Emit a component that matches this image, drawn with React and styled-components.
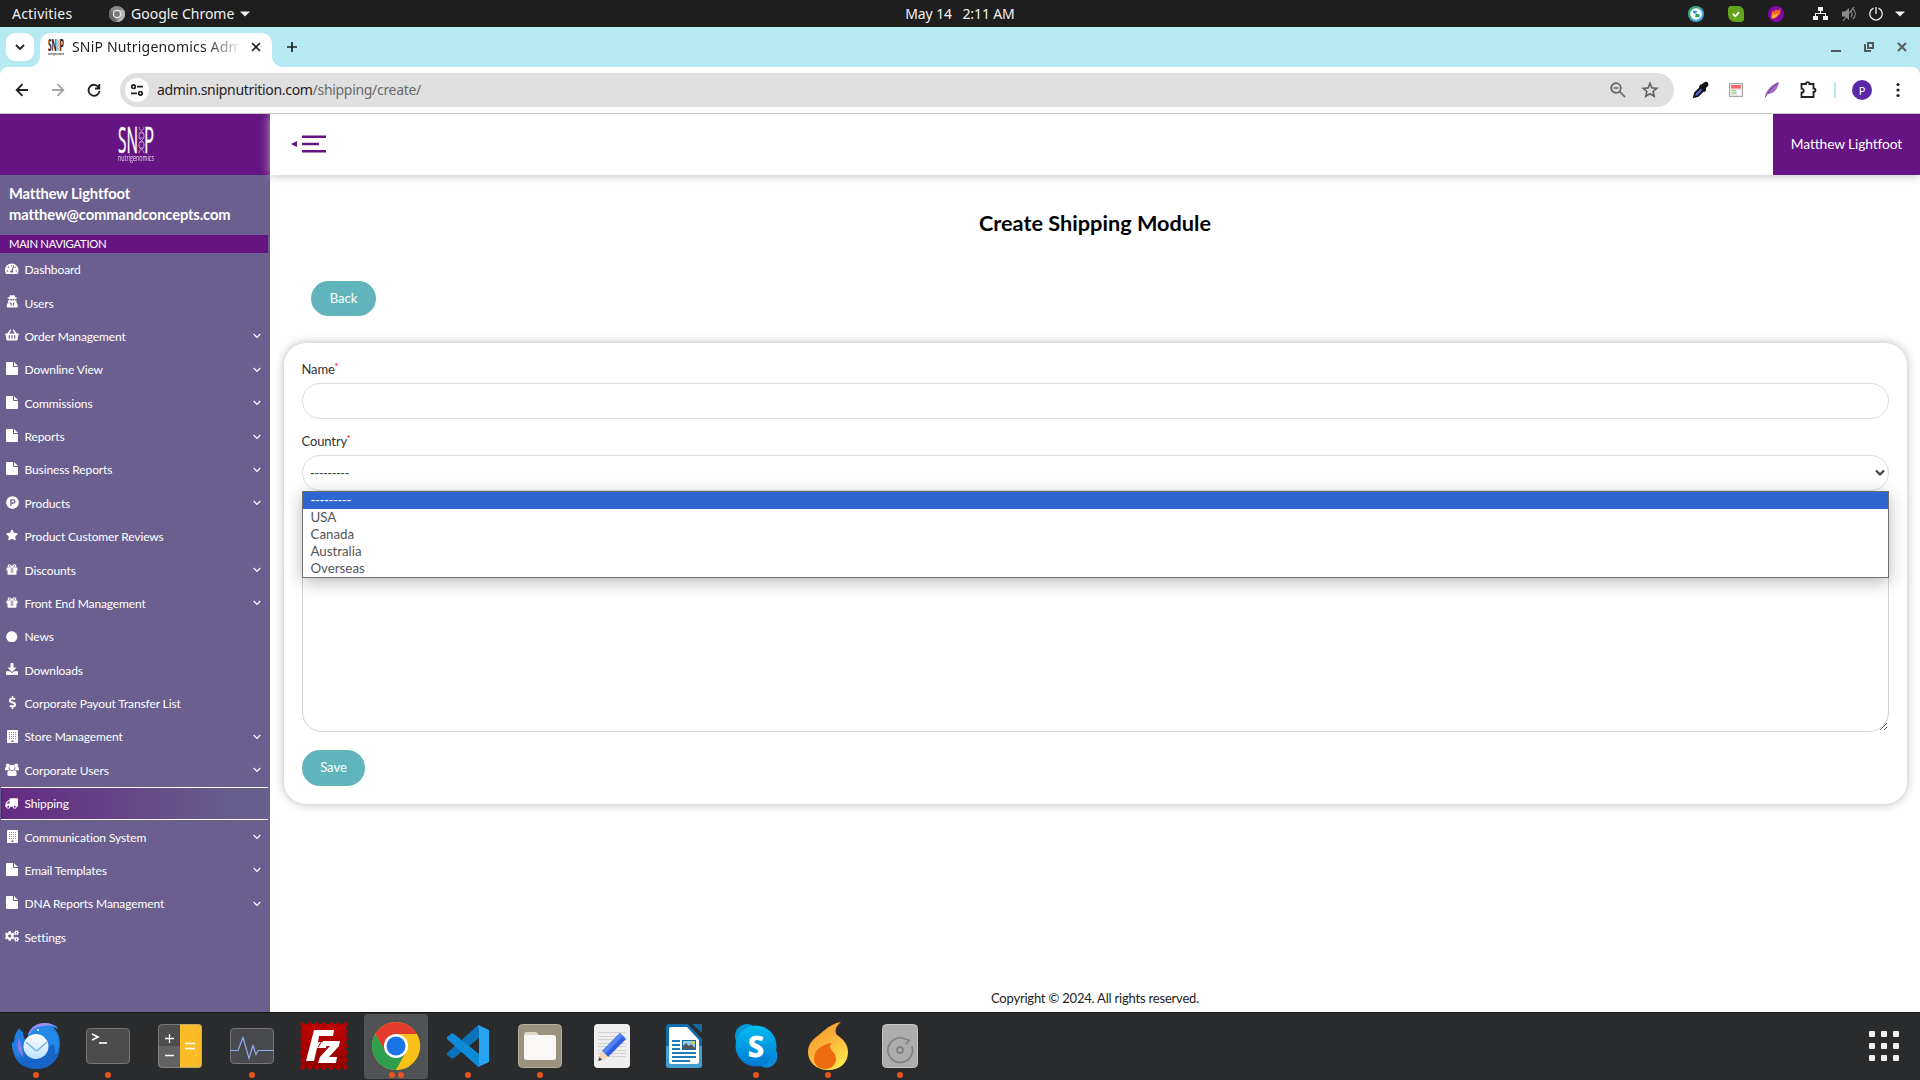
import React from 'react';
import styled, { createGlobalStyle, css } from 'styled-components';
import {
  FaTachometerAlt, FaUserSecret, FaShoppingBasket, FaProductHunt, FaStar,
  FaCircle, FaDownload, FaDollarSign, FaTruck, FaCogs,
} from 'react-icons/fa';

const PURPLE = '#661483';
const TEAL = '#60b5bc';
const SHADOW = '#b9b2b4';

const GlobalStyle = createGlobalStyle`
  *, *::before, *::after { box-sizing: border-box; }
  html, body { margin: 0; padding: 0; overflow: hidden; }
  body { font-family: Lato, "Liberation Sans", sans-serif; background: #fff; }
  svg { display: block; flex: none; }
`;

const Screen = styled.div`
  width: 1920px;
  height: 1080px;
  display: flex;
  flex-direction: column;
  overflow: hidden;
`;

/* ---------- desktop top bar ---------- */
const systemFont = css`font-family: "Noto Sans", "Open Sans", sans-serif;`;

const TopBar = styled.header`
  ${systemFont}
  height: 27px;
  flex: none;
  background: #1e1e1e;
  color: #f2f2f2;
  font-size: 14px;
  display: grid;
  grid-template-columns: 1fr auto 1fr;
  align-items: center;
  line-height: 26px;
`;
const TopLeft = styled.div`
  display: flex;
  align-items: center;
  padding-left: 12px;
`;
const Label = styled.span`
  letter-spacing: ${(p) => p.$track || 0}px;
  white-space: pre;
  width: ${(p) => (p.$w ? `${p.$w}px` : 'auto')};
`;
const AppMenu = styled.div`
  display: flex;
  align-items: center;
  margin-left: 35px;
  svg + span { margin-left: 6px; }
  span + svg { margin-left: 6px; }
`;
const Tray = styled.div`
  display: flex;
  justify-content: flex-end;
  align-items: center;
  padding-right: 12px;
`;
const TrayIcon = styled.span`
  display: flex;
  justify-content: center;
  width: 16px;
  margin-left: ${(p) => p.$gap}px;
`;

/* ---------- browser ---------- */
const TabStrip = styled.div`
  ${systemFont}
  height: 40px;
  flex: none;
  background: #b6e9f2;
  display: flex;
  align-items: flex-start;
  padding: 6px 13px 0 6px;
`;
const TabSearch = styled.div`
  width: 28px;
  height: 28px;
  border-radius: 9px;
  background: #fff;
  display: grid;
  place-items: center;
`;
const Tab = styled.div`
  position: relative;
  width: 232px;
  height: 34px;
  margin-left: 6px;
  border-radius: 10px 10px 0 0;
  background: #fff;
  display: flex;
  align-items: center;
  padding: 0 10px 6px 8px;
  &::before, &::after {
    content: '';
    position: absolute;
    bottom: 0;
    width: 10px;
    height: 10px;
  }
  &::before { left: -10px; background: radial-gradient(circle at 0 0, transparent 9.5px, #fff 10px); }
  &::after { right: -10px; background: radial-gradient(circle at 100% 0, transparent 9.5px, #fff 10px); }
`;
const TabTitle = styled.span`
  width: 167px;
  margin-left: 8px;
  overflow: hidden;
  white-space: nowrap;
  font-size: 14px;
  letter-spacing: 0.18px;
  line-height: 26px;
  color: #1f2023;
  -webkit-mask-image: linear-gradient(90deg, #000 134px, transparent 170px);
  mask-image: linear-gradient(90deg, #000 134px, transparent 170px);
`;
const TabClose = styled.span`margin-left: 12px;`;
const NewTab = styled.span`margin: 9px 0 0 15px;`;
const WindowControls = styled.div`
  margin-left: auto;
  display: flex;
  gap: 23px;
  padding-top: 9px;
`;
const ToolbarBack = styled.div`
  background: #b6e9f2;
  flex: none;
`;
const Toolbar = styled.div`
  ${systemFont}
  height: 47px;
  background: #fff;
  border-bottom: 1px solid #c8c9c9;
  border-radius: 8px 8px 0 0;
  display: flex;
  align-items: center;
  padding: 0 15px 0 15px;
`;
const NavButtons = styled.div`
  display: flex;
  gap: 22px;
  margin-right: 19px;
`;
const Omnibox = styled.div`
  width: 1554px;
  height: 34px;
  border-radius: 17px;
  background: #e0e0e0;
  display: flex;
  align-items: center;
  padding: 0 15px 0 5px;
  font-size: 14px;
  color: #1f2023;
`;
const SiteInfo = styled.span`
  width: 24px;
  height: 24px;
  border-radius: 50%;
  background: #fff;
  display: grid;
  place-items: center;
  margin-right: 8px;
`;
const Url = styled.span`
  letter-spacing: -0.31px;
  padding-bottom: 2px;
`;
const UrlPath = styled.span`color: #68696b;`;
const OmniActions = styled.div`
  margin-left: auto;
  display: flex;
  gap: 14px;
`;
const Extensions = styled.div`
  display: flex;
  align-items: center;
  gap: 18px;
  margin-left: 17px;
`;
const Divider = styled.i`
  width: 2px;
  height: 16px;
  background: #b6e9f2;
  margin-left: 17px;
`;
const Avatar = styled.span`
  width: 20px;
  height: 20px;
  border-radius: 50%;
  background: #5a27a8;
  color: #fff;
  font-size: 11px;
  display: grid;
  place-items: center;
  margin-left: 16px;
`;
const More = styled.span`margin-left: 24px;`;

/* ---------- page ---------- */
const Page = styled.div`
  height: 898px;
  flex: none;
  display: flex;
`;
const Sidebar = styled.aside`
  width: 270px;
  background: #6a5f8f;
  color: #fff;
  display: flex;
  flex-direction: column;
`;
const Brand = styled.div`
  height: 61px;
  background: ${PURPLE};
  display: flex;
  justify-content: center;
  padding: 11px 0 0 2px;
`;
const UserBlock = styled.div`
  height: 60px;
  padding: 8px 9px 0;
  font-size: 14.7px;
  letter-spacing: -0.12px;
  font-weight: 700;
  line-height: 21.4px;
`;
const NavHeading = styled.div`
  width: 268px;
  height: 18px;
  background: ${PURPLE};
  padding-left: 9px;
  font-size: 11.3px;
  letter-spacing: -0.3px;
  line-height: 18px;
`;
const NavItem = styled.a`
  width: 268px;
  height: 33.375px;
  display: flex;
  align-items: center;
  padding: 0 7px 0 5px;
  font-size: 12px;
  color: #fff;
  flex: none;
  ${(p) => p.$active && css`
    margin-left: 1px;
    width: 267px;
    padding-left: 4px;
    border-top: 1px solid #fff;
    border-bottom: 1px solid #fff;
    background: linear-gradient(90deg, ${PURPLE} 0, ${PURPLE} 1px, #652a83 1px, #665f8d 88%);
  `}
`;
const NavIcon = styled.span`
  width: 14px;
  margin-right: 5.5px;
  padding-bottom: ${(p) => p.$lift}px;
  display: flex;
  justify-content: center;
  transform: ${(p) => (p.$flip ? 'scaleX(-1)' : 'none')};
`;
const NavText = styled.span`
  flex: 1;
  line-height: 16px;
  letter-spacing: -0.12px;
  padding-top: 1px;
`;

const Main = styled.main`
  flex: 1;
  display: flex;
  flex-direction: column;
`;
const PageHeader = styled.div`
  height: 61px;
  flex: none;
  background: #fff;
  box-shadow: 0 0 10px ${SHADOW};
  display: flex;
  justify-content: space-between;
  align-items: center;
  padding-left: 21px;
  clip-path: inset(0 0 -20px -10px);
`;
const MenuToggle = styled.div`
  padding-bottom: 0.5px;
`;
const Account = styled.div`
  width: 147px;
  height: 61px;
  background: ${PURPLE};
  color: #fff;
  font-size: 13.8px;
  letter-spacing: -0.12px;
  padding-bottom: 2px;
  display: grid;
  place-items: center;
`;
const Title = styled.h1`
  margin: 35px 0 0;
  font-size: 21.7px;
  line-height: 26px;
  font-weight: 700;
  color: #000;
  text-align: center;
`;
const Button = styled.button`
  height: ${(p) => p.$h}px;
  width: ${(p) => p.$w}px;
  border: 0;
  border-radius: 18px;
  background: ${TEAL};
  color: #fff;
  font: 13px Lato, "Liberation Sans", sans-serif;
  padding: 0 0 ${(p) => p.$lift || 1}px;
`;
const Actions = styled.div`
  padding: 45px 41px 0;
  display: flex;
`;
const Card = styled.section`
  margin: 27px 13px 0 14px;
  height: 461px;
  border-radius: 22px;
  padding: 17px 18px 0;
  background: #fff;
  box-shadow: 0 0 10px ${SHADOW};
`;
const Field = styled.div`
  position: relative;
  height: 72px;
`;
const FieldLabel = styled.label`
  display: block;
  height: 23px;
  line-height: 19px;
  font-size: 13px;
  letter-spacing: -0.12px;
  margin-left: -0.5px;
  color: #333;
  sup { color: #f00; font-size: 10px; line-height: 0; vertical-align: 4px; margin-left: -0.5px; }
`;
const Control = styled.div`
  height: 36px;
  border: 1px solid #dcdcdc;
  border-radius: 18px;
  display: flex;
  align-items: center;
  justify-content: space-between;
  padding: 0 3px 0 7px;
  font-size: 13px;
  letter-spacing: -0.5px;
  color: #444;
`;
const Options = styled.ul`
  position: absolute;
  z-index: 2;
  left: 0;
  right: 0;
  top: 59px;
  margin: 0;
  padding: 0;
  list-style: none;
  border: 1px solid #6f6f6f;
  background: #fff;
  box-shadow: 0 4px 16px rgba(0, 0, 0, 0.28);
`;
const Option = styled.li`
  height: 17px;
  line-height: 17px;
  padding-left: 7.5px;
  font-size: 13.3px;
  letter-spacing: ${(p) => (p.$selected ? '-0.45px' : '0')};
  color: ${(p) => (p.$selected ? '#fff' : '#555')};
  background: ${(p) => (p.$selected ? '#2e66cf' : '#fff')};
`;
const TextArea = styled.textarea`
  display: block;
  width: 100%;
  height: 205px;
  margin: 23px 0 18px;
  border: 1px solid #ced4da;
  border-radius: 20px;
  resize: vertical;
  outline: 0;
`;
const Footer = styled.footer`
  margin-top: auto;
  padding-bottom: 6px;
  text-align: center;
  font-size: 13px;
  letter-spacing: -0.2px;
  line-height: 16px;
  color: #222;
`;

/* ---------- dock ---------- */
const Dock = styled.nav`
  height: 68px;
  flex: none;
  background: #2a2b2d;
  border-top: 1px solid #1b1b1d;
  display: flex;
`;
const DockItem = styled.div`
  width: 64px;
  height: 65px;
  margin: 1px 4px 0;
  border-radius: 4px;
  background: ${(p) => (p.$active ? '#515254' : 'transparent')};
  display: flex;
  flex-direction: column;
  align-items: center;
  padding-top: 7px;
`;
const Dots = styled.div`
  display: flex;
  gap: 3px;
  margin-top: 1px;
  i { width: 6px; height: 6px; border-radius: 50%; background: #e95420; }
`;
const AppGrid = styled.div`
  margin: 18px 21px 0 auto;
  display: grid;
  grid-template-columns: repeat(3, 6px);
  grid-auto-rows: 6px;
  gap: 6px;
  i { background: #f1f1ef; border-radius: 1px; }
`;

const Stroke = ({ w = 14, h = w, vb, d, color = '#1f2023', sw = 2, children }) => (
  <svg width={w} height={h} viewBox={vb || `0 0 ${w} ${h}`} fill="none" stroke={color} strokeWidth={sw}>
    {d && <path d={d} />}
    {children}
  </svg>
);

const LogoMark = ({ w, h, dark }) => {
  const c = dark ? '#222' : '#fff';
  return (
    <svg width={w} height={h} viewBox="0 0 36 38" fill={c} overflow="visible" fontFamily='"Open Sans", sans-serif' fontWeight={dark ? 700 : 400} stroke={c} strokeWidth={dark ? 0 : 0.4}>
      <text x="0" y="27" fontSize="36" textLength="20" lengthAdjust="spacingAndGlyphs">SN</text>
      <text x="26" y="27" fontSize="36" textLength="10" lengthAdjust="spacingAndGlyphs">P</text>
      <g fill="none" stroke={dark ? '#c96' : '#cdb2d8'} strokeWidth={dark ? 2 : 0.9}>
        <path d="M21 1c0 4 5 4 5 9s-5 4-5 9 5 4 5 8M26 1c0 4-5 4-5 9s5 4 5 9-5 4-5 8M21.5 7h4M21.5 12h4M21.5 16h4M21.5 22h4" />
      </g>
      <text x="0" y="35" fontSize="9.5" strokeWidth="0" opacity="0.85" textLength="36" lengthAdjust="spacingAndGlyphs">nutrigenomics</text>
    </svg>
  );
};

const PageIcon = () => (
  <svg width="12" height="13" viewBox="0 0 12 13" fill="#fff">
    <path d="M1 0h6v4.200c0 .4.3.8.8.8H12v7.200a.8.8 0 0 1-.8.8H.8a.8.8 0 0 1-.8-.8V.8C0 .3.400 0 1 0zM8 0l4 4H8z" />
  </svg>
);
const GiftIcon = () => (
  <svg width="12" height="11" viewBox="0 0 12 11">
    <path d="M.5 3.500h11v3h-1V10a.8.8 0 0 1-.8.8H2.300a.8.8 0 0 1-.8-.8V6.500h-1z" fill="#fff" />
    <path d="M6 3.500C5 1.500 4.300.7 3.300.7 1.800.700 1.800 3 3.300 3H6c-.1 0 1-2.300 2.700-2.300 1.500 0 1.500 2.300 0 2.300H6" fill="none" stroke="#fff" strokeWidth="1.100" />
    <path d="M4.800 4v5h.7V4zM6.500 4v5h.7V4z" fill="#6a5f8f" />
  </svg>
);
const BuildingIcon = () => (
  <svg width="11" height="13" viewBox="0 0 11 13">
    <rect width="11" height="13" rx="0.600" fill="#fff" />
    <path d="M2 2.500h7M2 4.500h7M2 6.500h7M2 8.500h7" stroke="#8f86b3" strokeWidth="1" strokeDasharray="1 1" />
    <path d="M4.500 10.500h2V12h-2z" fill="#6a5f8f" />
  </svg>
);
const GroupIcon = () => (
  <svg width="14" height="13" viewBox="0 0 14 13" fill="#fff">
    <circle cx="2.800" cy="2.300" r="1.900" />
    <circle cx="11.200" cy="2.300" r="1.900" />
    <path d="M0 7.300V5.800C0 4.500.600 4 1.300 4h2.400c-.4 1.300.1 2.400 1 3.300zM14 7.300V5.800C14 4.500 13.400 4 12.700 4h-2.400c.4 1.300-.1 2.400-1 3.300z" />
    <circle cx="7" cy="4.500" r="2.700" />
    <path d="M2.300 11c0-2.600.9-3.700 2.300-3.700 1.500 1 3.300 1 4.800 0 1.400 0 2.300 1.100 2.300 3.700 0 1.300-.8 2-1.900 2H4.200c-1.100 0-1.900-.7-1.900-2z" />
  </svg>
);

/* label, icon, icon size, has submenu, icon lift */
const NAV = [
  ['Dashboard', FaTachometerAlt, 13.5, 0, 1], ['Users', FaUserSecret, 12.5, 0, 3],
  ['Order Management', FaShoppingBasket, 14, 1, 2], ['Downline View', PageIcon, 13, 1, 2],
  ['Commissions', PageIcon, 13, 1, 2], ['Reports', PageIcon, 13, 1, 2], ['Business Reports', PageIcon, 13, 1, 2],
  ['Products', FaProductHunt, 13, 1, 2], ['Product Customer Reviews', FaStar, 12, 0, 3],
  ['Discounts', GiftIcon, 11, 1, 2], ['Front End Management', GiftIcon, 11, 1, 2], ['News', FaCircle, 11.5, 0, 1],
  ['Downloads', FaDownload, 12, 0, 3], ['Corporate Payout Transfer List', FaDollarSign, 13, 0, 3],
  ['Store Management', BuildingIcon, 13, 1, 1], ['Corporate Users', GroupIcon, 14, 1, 2],
  ['Shipping', FaTruck, 13, 0, 1], ['Communication System', BuildingIcon, 13, 1, 1],
  ['Email Templates', PageIcon, 13, 1, 2], ['DNA Reports Management', PageIcon, 13, 1, 2],
  ['Settings', FaCogs, 14, 0, 2],
];

const Icon48 = ({ children }) => <svg width="50" height="50" viewBox="0 0 50 50">{children}</svg>;

const Thunderbird = () => (
  <Icon48>
    <defs>
      <linearGradient id="tb" x1="0" y1="0" x2="0.4" y2="1"><stop offset="0" stopColor="#2da1f6" /><stop offset="1" stopColor="#0f58bd" /></linearGradient>
      <linearGradient id="tbe" x1="0" y1="0" x2="0" y2="1"><stop offset="0" stopColor="#fff" /><stop offset="1" stopColor="#b9e2ff" /></linearGradient>
    </defs>
    <path d="M1 21c1 1 2 1 2 0 0-6 2-11 6-14 0 2 1 3 3 4 0 5 2 8 5 10l-3 20C4 37 0 29 1 21z" fill="#1f7fe0" />
    <path d="M17 13C20 4 30 0 40 3c4 1 6 2 7 5l-5-2c5 5 7 10 7 17 0 15-10 25-24 25C12 48 3 40 2 29c2 4 4 6 8 8-5-10 0-17 6-20 1-1 1-3 1-4z" fill="url(#tb)" />
    <path d="M17 14C21 3 32 0 40 3l7 4c-7-3-12-3-16-1-6 1-9 4-14 8z" fill="#a78af0" />
    <path d="M20 11c7-9 18-6 23-1 7 8 6 20 0 26l-8-20z" fill="#2589ea" />
    <path d="M8 17c-3 8-1 14 4 19l-1-9z" fill="#8c7ae6" />
    <circle cx="25" cy="25.500" r="12.500" fill="url(#tbe)" />
    <path d="M15 21l9 8c1 1 2 1 3 0l9-8" fill="none" stroke="#79aede" strokeWidth="1.400" />
    <path d="M38 26c0 8-7 13-17 12 2 2 4 3 7 3-8 1-14-1-19-5 3 8 9 12 17 12 13 0 21-9 23-20-2 3-3 4-5 5 1-4 0-8-2-10z" fill="#1765c8" />
    <circle cx="27" cy="9" r="1" fill="#fff" />
  </Icon48>
);
const Terminal = () => (
  <Icon48>
    <rect x="3.500" y="7.500" width="43" height="35" rx="3.500" fill="#4c4c4c" stroke="#777" />
    <path d="M9 13l6 3-6 3" fill="none" stroke="#fff" strokeWidth="1.700" />
    <path d="M16 22h8" stroke="#fff" strokeWidth="1.600" />
  </Icon48>
);
const Calculator = () => (
  <Icon48>
    <path d="M25 3H7a4 4 0 0 0-4 4v18h22z" fill="#4d4d4d" />
    <path d="M25 25H3v18a4 4 0 0 0 4 4h18z" fill="#626262" />
    <path d="M25 3h18a4 4 0 0 1 4 4v36a4 4 0 0 1-4 4H25z" fill="#fcbc28" />
    <rect x="3.500" y="3.500" width="43" height="43" rx="4" fill="none" stroke="#999" opacity="0.600" />
    <path d="M10 17.500h9M14.500 13v9M10 34.500h9M30 22.500h10M30 27.500h10" stroke="#fff" strokeWidth="1.300" />
  </Icon48>
);
const Monitor = () => (
  <Icon48>
    <rect x="3.500" y="7.500" width="43" height="35" rx="3.500" fill="#48494c" stroke="#777" />
    <path d="M3 29.500h8l5-13 6 21 4-13 3 9 2-4h16" fill="none" stroke="#8fadf0" strokeWidth="1.200" />
  </Icon48>
);
const FileZilla = () => (
  <Icon48>
    <defs><linearGradient id="fz" x1="0" y1="0" x2="0" y2="1"><stop offset="0" stopColor="#c20404" /><stop offset="1" stopColor="#920000" /></linearGradient></defs>
    <rect x="3" y="3" width="44" height="44" fill="url(#fz)" />
    <rect x="3.500" y="3.500" width="43" height="43" fill="none" stroke="#ad0202" strokeWidth="4.600" strokeDasharray="0.010 7.157" strokeLinecap="round" />
    <path d="M15 9h20l-1 6H20l-1 6h9l-1 6h-9l-3 13H7z" fill="#fff" />
    <path d="M24 20h17l-1 5-10 11h8l-1 6H19l2-6 10-11h-8z" fill="#fff" />
    <path d="M23 19.500l-4 7" stroke="#a80202" strokeWidth="1" />
  </Icon48>
);
const Chrome = () => (
  <Icon48>
    <circle cx="25" cy="25" r="24" fill="#fbc116" />
    <path d="M4.200 13A24 24 0 0 1 45.800 13H25L14.600 31z" fill="#e33b2e" />
    <path d="M4.200 13A24 24 0 0 0 25 49l10.400-18-10.400 6-10.400-6z" fill="#2ea04d" />
    <path d="M25 13h20.800A24 24 0 0 1 25 49l10.400-18z" fill="#fbc116" />
    <circle cx="25" cy="25" r="12" fill="#fff" />
    <circle cx="25" cy="25" r="9.500" fill="#1a73e8" />
  </Icon48>
);
const VsCode = () => (
  <Icon48>
    <path d="M4 34l4 3c1 1 2 0 3 0L36 17V4c-1 0-2 1-3 2L4 32z" fill="#0b72ba" />
    <path d="M4 16l4-3c1-1 2 0 3 0l25 20v13c-1 0-2-1-3-2L4 18z" fill="#0d8bd9" />
    <path d="M35 4l11 5v32l-11 5c1-1 1-2 1-4V8z" fill="#27a5f3" />
  </Icon48>
);
const Files = () => (
  <Icon48>
    <rect x="3.500" y="3.500" width="43" height="43" rx="4" fill="#9a927d" stroke="#b5ae9d" />
    <path d="M9 14c0-2 1-3 2-3h10l3 3h13v8H9z" fill="#dedacd" />
    <rect x="9" y="14" width="32" height="25" rx="2.500" fill="#f9f8f6" />
  </Icon48>
);
const TextEditor = () => (
  <Icon48>
    <rect x="7" y="3" width="36" height="44" rx="4" fill="#efefef" />
    <path d="M11 11.500h28M11 15.500h28M11 18.500h28M11 22.500h28M11 25.500h28M11 29.500h28M11 32.500h28M11 35.500h28" stroke="#d2d2d2" />
    <path d="M33 12l6 6-18 18-6-6z" fill="#2f5fe0" />
    <path d="M33 12l3 3-18 18-3-3z" fill="#5284f5" />
    <path d="M15 30l6 6-6 3-3-3z" fill="#f7d7b5" />
    <path d="M12.500 36l-1.500 4 4-1z" fill="#444" />
  </Icon48>
);
const Writer = () => (
  <Icon48>
    <path d="M10 3h19l14 15v26a3 3 0 0 1-3 3H10a3 3 0 0 1-3-3V6a3 3 0 0 1 3-3z" fill="#116ca3" />
    <path d="M7 25h36v19a3 3 0 0 1-3 3H10a3 3 0 0 1-3-3z" fill="#3e9fd0" />
    <path d="M33 3h10v9z" fill="#1469a0" />
    <path d="M12 6h16l12 13v22a2 2 0 0 1-2 2H12a2 2 0 0 1-2-2V8a2 2 0 0 1 2-2z" fill="#fff" />
    <path d="M13 20h8M13 24h8M13 28h8M13 32h24M13 36h24M13 40h18" stroke="#1d7cb5" strokeWidth="1.800" />
    <rect x="23.500" y="19.500" width="13" height="9" fill="#8fd0f2" stroke="#1469a0" />
    <path d="M24 28v-3l3-3 3 3 2-2 4 4v1z" fill="#555" />
    <circle cx="34.500" cy="21.500" r="1.500" fill="#fbc116" />
  </Icon48>
);
const SkypeText = styled.text`font: 700 29px "Open Sans", sans-serif;`;
const Skype = () => (
  <Icon48>
    <defs><linearGradient id="sk" x1="0" y1="0" x2="0" y2="1"><stop offset="0" stopColor="#00bdf2" /><stop offset="1" stopColor="#0078d4" /></linearGradient></defs>
    <circle cx="16" cy="15" r="12" fill="#0596d8" />
    <circle cx="35" cy="35" r="11.500" fill="#0b8bdc" />
    <circle cx="25" cy="25" r="20.500" fill="url(#sk)" />
    <SkypeText x="25" y="35.500" fill="#fff" stroke="#fff" strokeWidth="0.800" textAnchor="middle">S</SkypeText>
  </Icon48>
);
const Flame = () => (
  <Icon48>
    <defs><linearGradient id="fl" x1="0" y1="0" x2="0.600" y2="1"><stop offset="0" stopColor="#f79420" /><stop offset="0.500" stopColor="#fbb03a" /><stop offset="1" stopColor="#ffe34a" /></linearGradient></defs>
    <path d="M38 1c-5 4-7 9-4 13 6 4 11 9 11 17 0 11-8 18-20 18S5 41 5 31c0-8 5-13 12-18C24 7 30 2 38 1z" fill="url(#fl)" />
    <path d="M29 22c-3 3-2 5 0 8 3 2 4 5 4 8 0 6-5 10-11 10s-11-4-11-10c0-9 8-15 18-16z" fill="#ee6a10" />
  </Icon48>
);
const Disk = () => (
  <Icon48>
    <rect x="7.500" y="3.500" width="35" height="43" rx="4" fill="#adadad" stroke="#c4c4c4" />
    <path d="M30.500 18A12.300 12.300 0 1 0 37 25.500M30.500 18l3.500 1.500-3 3.500" fill="none" stroke="#818181" strokeWidth="1.700" />
    <circle cx="25" cy="29" r="3" fill="none" stroke="#818181" strokeWidth="1.800" />
  </Icon48>
);

const DOCK = [
  [Thunderbird, 1], [Terminal, 1], [Calculator, 0], [Monitor, 1], [FileZilla, 0], [Chrome, 2],
  [VsCode, 1], [Files, 1], [TextEditor, 0], [Writer, 0], [Skype, 1], [Flame, 1], [Disk, 1],
];

function DesktopBar() {
  return (
    <TopBar>
      <TopLeft>
        <Label $w={62} $track={0.2}>Activities</Label>
        <AppMenu>
          <svg width="16" height="16" viewBox="0 0 16 16">
            <circle cx="8" cy="8" r="8" fill="#8a8a8a" />
            <path d="M8 8L1 4a8 8 0 0 0 6 12z" fill="#6c6c6c" />
            <path d="M8 4h7a8 8 0 0 1-7 12l4-7z" fill="#b5b5b5" />
            <circle cx="8" cy="8" r="4.200" fill="#eee" />
            <circle cx="8" cy="8" r="2.900" fill="#777" />
          </svg>
          <Label $w={103}>Google Chrome</Label>
          <svg width="10" height="6"><path d="M0 .5h10L5 5.500z" fill="#f2f2f2" /></svg>
        </AppMenu>
      </TopLeft>
      <Label $track={-0.12}>{'May 14   2:11 AM'}</Label>
      <Tray>
        <TrayIcon $gap={0}>
          <svg width="16" height="16" viewBox="0 0 16 16"><circle cx="8" cy="8" r="8" fill="#43a6dd" /><path d="M0 8a8 8 0 0 1 8-8l5 2-8 12a8 8 0 0 1-5-6z" fill="#35a96c" /><circle cx="8" cy="8" r="5.800" fill="#fff" /><path d="M5 4.500l4.500.5L7.500 8 5 7z" fill="#2f9fd8" /><path d="M8 7.500l3.500 1v3L7 11z" fill="#2aa06a" /></svg>
        </TrayIcon>
        <TrayIcon $gap={24}>
          <svg width="16" height="16" viewBox="0 0 16 16"><path d="M2 0h8c4 0 6 3 6 7v7l-2 2H8c-5 0-8-3-8-8V2z" fill="#62a51c" /><path d="M5 8l2.300 2.300L11 6.200" fill="none" stroke="#fff" strokeWidth="1.800" /></svg>
        </TrayIcon>
        <TrayIcon $gap={24}>
          <svg width="16" height="16" viewBox="0 0 16 16"><circle cx="8" cy="8" r="8" fill="#8207a8" /><path d="M3 11c0-3 1-5 2-7l1 2 2-3 1 2 4-3c-1 2-1 3-1 4l1-1c-1 4-4 7-9 8z" fill="#f76a1a" /><path d="M4 12c0-2 1-3 2-4l1 1 3-2c0 3-3 5-6 5z" fill="#ffc02e" /></svg>
        </TrayIcon>
        <TrayIcon $gap={28}>
          <svg width="15" height="13" viewBox="0 0 15 13" fill="#f2f2f2"><path d="M5 0h5v4H5zM0 9h5v4H0zM10 9h5v4h-5zM7 4h1v2H7zM2 6h11v1H2zM2 6h1v3H2zM12 6h1v3h-1z" /></svg>
        </TrayIcon>
        <TrayIcon $gap={13}>
          <svg width="15" height="14" viewBox="0 0 15 14"><path d="M0 4.500h3L7 1v12L3 9.500H0z" fill="#8b8b8b" /><path d="M9 4c1.500 2 1.500 4 0 6M11 2c3 3 3 7 0 10M1 14L12 0" stroke="#8b8b8b" fill="none" strokeWidth="1.200" /></svg>
        </TrayIcon>
        <TrayIcon $gap={11}>
          <svg width="14" height="14" viewBox="0 0 14 14" fill="none" stroke="#f2f2f2" strokeWidth="1.300"><path d="M4.500 1.200a6.200 6.200 0 1 0 5 0M7 0v7" /></svg>
        </TrayIcon>
        <TrayIcon $gap={8}>
          <svg width="10" height="6"><path d="M0 .5h10L5 5.500z" fill="#f2f2f2" /></svg>
        </TrayIcon>
      </Tray>
    </TopBar>
  );
}

function Browser() {
  return (
    <>
      <TabStrip>
        <TabSearch><Stroke w={10} h={6} d="M1 1l4 4 4-4" sw={1.8} /></TabSearch>
        <Tab>
          <LogoMark w={16} h={17} dark />
          <TabTitle>SNiP Nutrigenomics Adm</TabTitle>
          <TabClose><Stroke w={10} d="M1 1l8 8M9 1l-8 8" sw={1.7} /></TabClose>
        </Tab>
        <NewTab><Stroke w={10} d="M5 0v10M0 5h10" sw={1.7} /></NewTab>
        <WindowControls>
          <Stroke w={10} d="M0 9h10" color="#555b5d" />
          <Stroke w={10} d="M4 1h5v5H4zM1 2v7h6" color="#555b5d" />
          <Stroke w={10} d="M1 1l8 8M9 1l-8 8" color="#555b5d" />
        </WindowControls>
      </TabStrip>
      <ToolbarBack>
        <Toolbar>
          <NavButtons>
            <Stroke w={14} d="M13 7H2M7.500 1.200L1.700 7l5.800 5.800" sw={1.8} />
            <Stroke w={14} d="M1 7h11M6.500 1.200L12.300 7l-5.800 5.800" sw={1.8} color="#a3a3a3" />
            <Stroke w={14} d="M11.800 4.500A5.500 5.500 0 1 0 12.500 8M12.300 1v4.500H8" sw={1.8} />
          </NavButtons>
          <Omnibox>
            <SiteInfo>
              <Stroke w={14} sw={1.7}><circle cx="3.500" cy="3.700" r="1.800" /><circle cx="10.500" cy="10.300" r="1.800" /><path d="M7 3.700h6M1 10.300h6" /></Stroke>
            </SiteInfo>
            <Url>admin.snipnutrition.com<UrlPath>/shipping/create/</UrlPath></Url>
            <OmniActions>
              <Stroke w={18} color="#5f6164" sw={1.7}><circle cx="7" cy="7" r="4.800" /><path d="M10.500 10.500l5.500 5.500M4.500 7h5" /></Stroke>
              <Stroke w={18} color="#5f6164" sw={1.6} d="M9 2.400l1.900 4.500 4.900.4-3.700 3.200 1.100 4.800L9 12.800l-4.200 2.500 1.100-4.800L2.200 7.300l4.900-.4z" />
            </OmniActions>
          </Omnibox>
          <Extensions>
            <svg width="18" height="18" viewBox="0 0 18 18"><path d="M3 16l1-4 6-6 3 3-6 6z" fill="#5567d8" stroke="#111" strokeWidth="1.800" /><path d="M9 4l2-1 3-2c3-1 4 2 3 4l-2 2 0 3-2 1-5-5z" fill="#111" /></svg>
            <svg width="18" height="18" viewBox="0 0 18 18"><rect x="2.500" y="2.500" width="13" height="13" fill="#e6e6e6" stroke="#a8a8a8" /><path d="M4 4h10v3.500H4z" fill="#f46a6a" /><path d="M10 9h4v5h-4z" fill="#fff" /><path d="M5 9.500h4M5 12h4" stroke="#8ccf5a" /></svg>
            <svg width="18" height="18" viewBox="0 0 18 18"><path d="M2 16C3 9 9 3 16 1c-1 5-3 9-7 11-2 1-4 1-5 1z" fill="#a46cc4" /><path d="M2 16.500C5 11 9 6 15 2" stroke="#6d3494" fill="none" /></svg>
            <Stroke w={18} sw={1.8} d="M3.500 3H7c0-2.600 3.400-2.600 3.400 0h4.100v4.500c2.600 0 2.600 3.400 0 3.400V16h-12v-4.300c3 0 3-4 0-4V3z" />
          </Extensions>
          <Divider />
          <Avatar>P</Avatar>
          <More><svg width="4" height="16" fill="#1f2023"><circle cx="2" cy="2.500" r="1.600" /><circle cx="2" cy="8" r="1.600" /><circle cx="2" cy="13.500" r="1.600" /></svg></More>
        </Toolbar>
      </ToolbarBack>
    </>
  );
}

function SideNav() {
  return (
    <Sidebar>
      <Brand><LogoMark w={36} h={40} /></Brand>
      <UserBlock>
        <div>Matthew Lightfoot</div>
        <div>matthew@commandconcepts.com</div>
      </UserBlock>
      <NavHeading>MAIN NAVIGATION</NavHeading>
      {NAV.map(([name, Ico, size, more, lift]) => (
        <NavItem key={name} $active={name === 'Shipping'}>
          <NavIcon $lift={lift} $flip={name === 'Shipping'}><Ico size={size} /></NavIcon>
          <NavText>{name}</NavText>
          {more ? <Stroke w={8} h={6} d="M.7 1L4 4.300 7.300 1" color="#fff" sw={1.2} /> : null}
        </NavItem>
      ))}
    </Sidebar>
  );
}

export default function App() {
  return (
    <Screen>
      <GlobalStyle />
      <DesktopBar />
      <Browser />
      <Page>
        <SideNav />
        <Main>
          <PageHeader>
            <MenuToggle>
              <svg width="36" height="18" viewBox="0 0 36 18" fill={PURPLE}>
                <path d="M6 6v6L0 9zM11 .5h24v2.500H11zM11 7.700h17v2.500H11zM11 15h24v2.500H11z" />
              </svg>
            </MenuToggle>
            <Account>Matthew Lightfoot</Account>
          </PageHeader>
          <Title>Create Shipping Module</Title>
          <Actions><Button $w={65} $h={35}>Back</Button></Actions>
          <Card>
            <Field>
              <FieldLabel>Name<sup>*</sup></FieldLabel>
              <Control />
            </Field>
            <Field>
              <FieldLabel>Country<sup>*</sup></FieldLabel>
              <Control>
                <span>---------</span>
                <Stroke w={10} h={8} d="M1 1.500l4 4 4-4" color="#444" sw={2.2} />
              </Control>
              <Options>
                {['---------', 'USA', 'Canada', 'Australia', 'Overseas'].map((o, i) => (
                  <Option key={o} $selected={i === 0}>{o}</Option>
                ))}
              </Options>
            </Field>
            <TextArea />
            <Button $w={63} $h={36} $lift={3}>Save</Button>
          </Card>
          <Footer>Copyright © 2024. All rights reserved.</Footer>
        </Main>
      </Page>
      <Dock>
        {DOCK.map(([Ico, dots], i) => (
          <DockItem key={i} $active={dots === 2}>
            <Ico />
            <Dots>{Array.from({ length: dots }, (_, k) => <i key={k} />)}</Dots>
          </DockItem>
        ))}
        <AppGrid>{Array.from({ length: 9 }, (_, k) => <i key={k} />)}</AppGrid>
      </Dock>
    </Screen>
  );
}
